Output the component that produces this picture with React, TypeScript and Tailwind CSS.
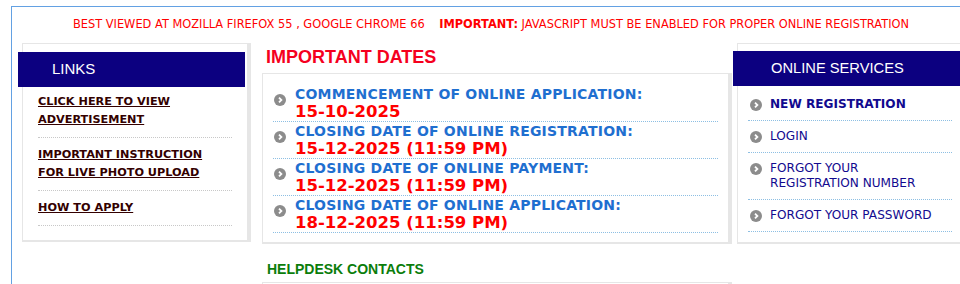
import React from "react";

const verdana = "font-['DejaVu_Sans',Verdana,sans-serif]";
const arial = "font-['Liberation_Sans',Arial,sans-serif]";

const Bullet = () => (
    <svg width="12" height="12" viewBox="0 0 12 12" className="shrink-0">
        <circle cx="6" cy="6" r="6" fill="#8c8c8c" />
        <path d="M5 3.6 L7.4 6 L5 8.4" fill="none" stroke="#fff" strokeWidth="1.8" />
    </svg>
);

const links = [
    ["CLICK HERE TO VIEW", "ADVERTISEMENT"],
    ["IMPORTANT INSTRUCTION", "FOR LIVE PHOTO UPLOAD"],
    ["HOW TO APPLY"],
];

const dates = [
    { label: "COMMENCEMENT OF ONLINE APPLICATION:", value: "15-10-2025" },
    { label: "CLOSING DATE OF ONLINE REGISTRATION:", value: "15-12-2025 (11:59 PM)" },
    { label: "CLOSING DATE OF ONLINE PAYMENT:", value: "15-12-2025 (11:59 PM)" },
    { label: "CLOSING DATE OF ONLINE APPLICATION:", value: "18-12-2025 (11:59 PM)" },
];

const services = [
    { lines: ["NEW REGISTRATION"], bold: true },
    { lines: ["LOGIN"] },
    { lines: ["FORGOT YOUR", "REGISTRATION NUMBER"] },
    { lines: ["FORGOT YOUR PASSWORD"] },
];

const App = () => {
    return (
        <div className="w-[960px] h-[284px] overflow-hidden bg-white">
            <div className="ml-[11px] mt-[6px] w-[966px] h-[300px] border-l border-t border-[#63a1e3]">
                <p className={`${verdana} pt-[11px] pr-[7px] text-center text-[11.4px] leading-[13px] text-[#ff0000]`}>
                    BEST VIEWED AT MOZILLA FIREFOX 55 , GOOGLE CHROME 66{"\u00a0\u00a0\u00a0\u00a0"}
                    <b>IMPORTANT:</b> JAVASCRIPT MUST BE ENABLED FOR PROPER ONLINE REGISTRATION
                </p>

                <div className="mt-[12px] flex items-start pl-[10px]">
                    {/* left links */}
                    <div className="w-[229px] border border-b-2 border-r-4 border-[#e6e6e6] pt-[8px] pb-[14px]">
                        <div className={`${arial} -ml-[5px] flex h-[35px] w-[227px] items-center bg-[#0c0080] pl-[34px] text-[15px] text-white`}>
                            LINKS
                        </div>
                        <div className="pt-[6px]">
                            {links.map((item, i) => (
                                <div
                                    key={i}
                                    className={`mx-[15px] border-b border-dotted border-[#c8c8c8] pb-[8px] ${i === 0 ? "pt-0" : "pt-[8px]"}`}
                                >
                                    {item.map((line) => (
                                        <div key={line} className={`${verdana} text-[11.25px] font-bold leading-[18px] text-[#330000] underline`}>
                                            {line}
                                        </div>
                                    ))}
                                </div>
                            ))}
                        </div>
                    </div>

                    {/* middle */}
                    <div className="ml-[11px] w-[470px]">
                        <h2 className={`${arial} ml-[4px] mt-[3px] text-[18px] font-bold leading-[22px] text-[#f5001e]`}>
                            IMPORTANT DATES
                        </h2>
                        <div className="mt-[5px] border border-b-2 border-r-4 border-[#e6e6e6] pt-[11px] pb-[9px]">
                            {dates.map((d) => (
                                <div key={d.label} className="mx-[10px] flex border-b border-dotted border-[#8dbfe3]">
                                    <div className="ml-[1px] mt-[9px]">
                                        <Bullet />
                                    </div>
                                    <div className={`${verdana} ml-[9px] font-bold`}>
                                        <div className="text-[14px] tracking-[0.2px] leading-[18px] text-[#1f6fd0]">{d.label}</div>
                                        <div className="text-[16.5px] leading-[18px] text-[#ff0000]">{d.value}</div>
                                    </div>
                                </div>
                            ))}
                        </div>
                        <h3 className={`${arial} ml-[5px] mt-[17px] text-[14px] font-bold leading-[16px] text-[#0b7d0b]`}>
                            HELPDESK CONTACTS
                        </h3>
                        <div className="mt-[5px] h-[40px] border border-r-4 border-[#e6e6e6]" />
                    </div>

                    {/* right services */}
                    <div className="ml-[5px] w-[229px] border border-b-2 border-r-4 border-[#e6e6e6] pt-[7px] pb-[10px]">
                        <div className={`${arial} -ml-[5px] flex h-[35px] w-[233px] items-center bg-[#0c0080] pl-[38px] text-[14.7px] text-white`}>
                            ONLINE SERVICES
                        </div>
                        <div className="pt-[3px]">
                            {services.map((s) => (
                                <div key={s.lines.join()} className="mx-[10px] flex border-b border-dotted border-[#8dbfe3] pt-[8px] pb-[8px]">
                                    <div className="ml-[2px] mt-[1.5px]">
                                        <Bullet />
                                    </div>
                                    <div
                                        className={`${verdana} ml-[8px] text-[12.1px] leading-[15px] text-[#120a8f] ${s.bold ? "font-bold" : "font-normal"}`}
                                    >
                                        {s.lines.map((line) => (
                                            <div key={line}>{line}</div>
                                        ))}
                                    </div>
                                </div>
                            ))}
                        </div>
                    </div>
                </div>
            </div>
        </div>
    );
};

export default App;
